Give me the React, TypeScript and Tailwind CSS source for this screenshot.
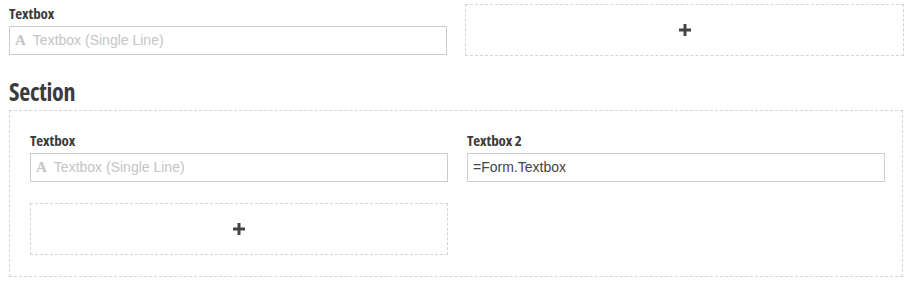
import React from "react";

const labelCls =
  "block pt-[2px] text-[15px] leading-[20px] font-bold text-[#3b3b3b] font-stretch-condensed [font-family:'Open_Sans',sans-serif] tracking-[-0.1px]";

function Plus() {
  return (
    <svg width="12" height="12" viewBox="0 0 12 12" aria-hidden>
      <rect x="0" y="4.5" width="12" height="3" fill="#444" />
      <rect x="4.5" y="0" width="3" height="12" fill="#444" />
    </svg>
  );
}

function AddBox() {
  return (
    <div className="h-[52px] border border-dashed border-[#d4d4d4] flex items-center justify-center">
      <Plus />
    </div>
  );
}

function Field({ label, value }: { label: string; value?: string }) {
  return (
    <div>
      <label className={labelCls}>{label}</label>
      <div className="mt-[3px] h-[29px] border border-[#cccccc] flex items-center px-[5px] [font-family:'Liberation_Sans',Arial,sans-serif] text-[14px]">
        {value ? (
          <span className="text-[#444]">{value}</span>
        ) : (
          <>
            <span className="[font-family:'Liberation_Serif',serif] font-bold text-[15px] text-[#c4c4c4] mr-[7px]">A</span>
            <span className="text-[#c4c4c4]">Textbox (Single Line)</span>
          </>
        )}
      </div>
    </div>
  );
}

export default function App() {
  return (
    <div className="w-[913px] h-[288px] bg-white pl-[9px] pr-[9px] pt-[1px] overflow-hidden">
      <div className="grid grid-cols-[438px_439px] gap-x-[18px] items-start">
        <Field label="Textbox" />
        <div className="mt-[3px]">
          <AddBox />
        </div>
      </div>
      <h2 className="mt-[21px] text-[24px] leading-[30px] font-bold text-[#3b3b3b] font-stretch-condensed [font-family:'Open_Sans',sans-serif] tracking-[-0.3px]">
        Section
      </h2>
      <div className="mt-[3px] w-[894px] h-[167px] border border-dashed border-[#d4d4d4] pl-[20px] pr-[17px] pt-[17px]">
        <div className="grid grid-cols-[418px_418px] gap-x-[19px]">
          <Field label="Textbox" />
          <Field label="Textbox 2" value="=Form.Textbox" />
        </div>
        <div className="mt-[21px] w-[418px]">
          <AddBox />
        </div>
      </div>
    </div>
  );
}
